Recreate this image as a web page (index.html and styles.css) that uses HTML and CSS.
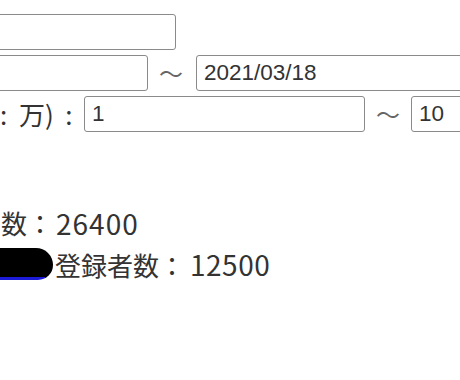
FILE: index.html
```html
<!DOCTYPE html>
<html lang="ja">
<head>
    <meta charset="UTF-8">
    <meta name="viewport" content="width=device-width, initial-scale=1.0">
    <title>検索</title>
    <link rel="stylesheet" href="styles.css">
</head>
<body>
    <form class="search">
        <div class="row">
            <input type="text" class="field field-keyword" aria-label="キーワード">
        </div>
        <div class="row">
            <input type="text" class="field field-from" aria-label="開始日">
            <span class="tilde">〜</span>
            <input type="text" class="field field-to" value="2021/03/18" aria-label="終了日">
        </div>
        <div class="row">
            <span class="label">:  万)  :</span>
            <input type="text" class="field field-min" value="1" aria-label="下限">
            <span class="tilde">〜</span>
            <input type="text" class="field field-max" value="10" aria-label="上限">
        </div>
    </form>

    <div class="stats">
        <div class="stat">数：<span class="num">26400</span></div>
        <div class="stat">
            <a href="#" class="masked" aria-label="リンク"></a>
            <span>登録者数：<span class="num">12500</span></span>
        </div>
    </div>
</body>
</html>
```

FILE: styles.css
```css
* {
    box-sizing: border-box;
}

body {
    margin: 0;
    overflow: hidden;
    font-family: "Noto Sans CJK JP", sans-serif;
    color: #333;
    background: #fff;
}

.search {
    display: flex;
    flex-direction: column;
    gap: 5px;
    padding-top: 14px;
}

.row {
    display: flex;
    align-items: center;
    height: 36px;
}

.field {
    flex: none;
    height: 36px;
    padding: 0 7px;
    border: 1px solid #8a8a8a;
    border-radius: 3px;
    font-family: "Liberation Sans", Arial, sans-serif;
    font-size: 22.5px;
    color: #333;
    background: #fff;
}

.field-keyword {
    width: 196px;
    margin-left: -20px;
}

.field-from {
    width: 168px;
    margin-left: -20px;
}

.field-to {
    width: 300px;
    margin-left: 2px;
}

.field-min {
    width: 281px;
}

.field-max {
    width: 120px;
}

.label {
    flex: none;
    width: 84px;
    font-size: 26px;
    line-height: 1;
    white-space: pre;
}

.tilde {
    flex: none;
    width: 24px;
    margin: 0 11px;
    font-size: 24px;
    line-height: 1;
    color: #666;
}

.stats {
    margin-top: 70px;
    font-size: 26px;
}

.stat {
    display: flex;
    align-items: center;
    height: 41px;
}

.stat:first-child {
    padding-left: 1px;
}

.num {
    margin-left: 3px;
    font-size: 28px;
    letter-spacing: 1px;
}

.stat .masked + span .num {
    margin-left: 5px;
    letter-spacing: 0.5px;
}

.masked {
    flex: none;
    width: 53px;
    height: 32px;
    margin-right: 2px;
    border-radius: 0 17px 15px 0;
    background: linear-gradient(#1b1bd8, #1b1bd8) left bottom / 45px 3px no-repeat, #000;
}
```
